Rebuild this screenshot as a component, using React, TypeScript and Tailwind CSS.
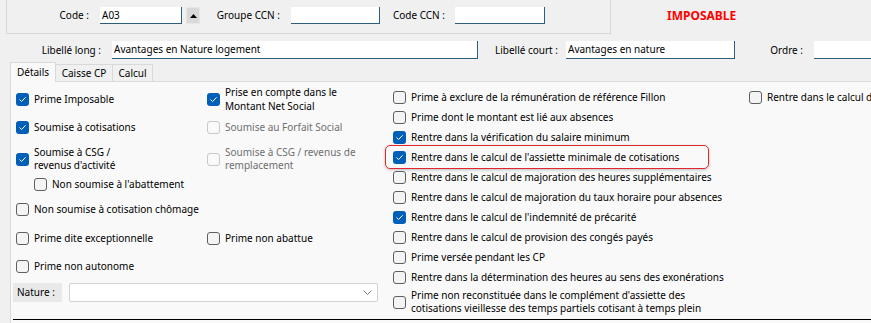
import React from "react";

type CbProps = { checked?: boolean; disabled?: boolean };

function Box({ checked, disabled }: CbProps) {
  if (checked) {
    return (
      <span className="flex h-[13px] w-[13px] shrink-0 items-center justify-center rounded-[3px] bg-[#005fb8]">
        <svg width="9" height="9" viewBox="0 0 9 9" fill="none">
          <path d="M1.8 4.8 L3.6 6.5 L7.3 2.6" stroke="white" strokeWidth="1" strokeLinecap="round" strokeLinejoin="round" />
        </svg>
      </span>
    );
  }
  if (disabled) {
    return <span className="block h-[13px] w-[13px] shrink-0 rounded-[3px] border border-[#c8c8c8] bg-[#fafafa]" />;
  }
  return <span className="block h-[13px] w-[13px] shrink-0 rounded-[3px] border border-[#5f5f5f] bg-[#f4f4f4]" />;
}

function Cb({ checked, disabled, children, className = "" }: CbProps & { children: React.ReactNode; className?: string }) {
  return (
    <div className={`flex items-center gap-[5px] ${className}`}>
      <Box checked={checked} disabled={disabled} />
      <span className={`whitespace-nowrap ${disabled ? "text-[#6f6f6f]" : "text-black"}`}>{children}</span>
    </div>
  );
}

function Field({ className = "", children }: { className?: string; children?: React.ReactNode }) {
  return (
    <div className={`flex items-center bg-white border-b border-r border-[#2c5d7c] pl-[2px] whitespace-nowrap overflow-hidden ${className}`}>
      {children}
    </div>
  );
}

const col3: { t: string; c?: boolean; hl?: boolean }[] = [
  { t: "Prime à exclure de la rémunération de référence Fillon" },
  { t: "Prime dont le montant est lié aux absences" },
  { t: "Rentre dans la vérification du salaire minimum", c: true },
  { t: "Rentre dans le calcul de l'assiette minimale de cotisations", c: true, hl: true },
  { t: "Rentre dans le calcul de majoration des heures supplémentaires" },
  { t: "Rentre dans le calcul de majoration du taux horaire pour absences" },
  { t: "Rentre dans le calcul de l'indemnité de précarité", c: true },
  { t: "Rentre dans le calcul de provision des congés payés" },
  { t: "Prime versée pendant les CP" },
  { t: "Rentre dans la détermination des heures au sens des exonérations" },
];

export default function App() {
  return (
    <div className="relative h-[323px] w-[871px] overflow-hidden bg-[#f0f0f0] font-['Noto_Sans',sans-serif] text-[10px] text-black">
      {/* Top group */}
      <div className="flex h-[34px] items-start">
        <div className="ml-[6px] flex h-[34px] w-[605px] shrink-0 items-start border-b border-l border-r border-[#d7d7d7] pt-[7px]">
          <div className="flex h-[17px] w-[82px] shrink-0 items-center justify-end">Code :</div>
          <Field className="ml-[11px] h-[17px] w-[82px] shrink-0">A03</Field>
          <div className="ml-[4px] flex h-[17px] w-[14px] shrink-0 items-center justify-center border border-[#e6e6e6] bg-[#d9d9d9]">
            <svg width="7" height="4" viewBox="0 0 7 4">
              <path d="M0 4 L3.5 0 L7 4 Z" fill="#000" />
            </svg>
          </div>
          <div className="flex h-[17px] w-[80px] shrink-0 items-center justify-end">Groupe CCN :</div>
          <Field className="ml-[11px] h-[17px] w-[89px] shrink-0" />
          <div className="flex h-[17px] w-[65px] shrink-0 items-center justify-end">Code CCN :</div>
          <Field className="ml-[10px] h-[17px] w-[90px] shrink-0" />
        </div>
        <div className="ml-[56px] pt-[7px] text-[12px] font-bold leading-[17px] text-[#ff0000]">IMPOSABLE</div>
      </div>

      {/* Libellé row */}
      <div className="mt-[7px] flex h-[18px] items-center">
        <div className="flex h-[18px] w-[101px] shrink-0 items-center justify-end">Libellé long :</div>
        <Field className="ml-[11px] h-[18px] w-[366px] shrink-0">Avantages en Nature logement</Field>
        <div className="flex h-[18px] w-[80px] shrink-0 items-center justify-end">Libellé court :</div>
        <Field className="ml-[8px] h-[18px] w-[169px] shrink-0">Avantages en nature</Field>
        <div className="flex h-[18px] w-[68px] shrink-0 items-center justify-end">Ordre :</div>
        <Field className="ml-[11px] h-[18px] w-[80px] shrink-0" />
      </div>

      {/* Tabs */}
      <div className="mt-[3px] flex h-[20px] items-end pl-[10px]">
        <div className="relative z-10 flex h-[20px] w-[46px] items-start justify-center border-l border-r border-t border-[#d9d9d9] bg-[#f9f9f9] pt-[2px]">
          Détails
        </div>
        <div className="relative z-10 mb-[1px] flex h-[17px] w-[57px] items-center justify-center border-r border-t border-[#d9d9d9] bg-[#f0f0f0]">
          Caisse CP
        </div>
        <div className="relative z-10 mb-[1px] flex h-[17px] w-[40px] items-center justify-center border-r border-t border-[#d9d9d9] bg-[#f0f0f0]">
          Calcul
        </div>
      </div>

      {/* Panel */}
      <div className="-mt-px ml-[10px] flex h-[242px] flex-col border-l border-t border-[#dadada] bg-[#f9f9f9]">
        <div className="flex h-[237px]">
          {/* Left area */}
          <div className="flex w-[382px] shrink-0 flex-col pl-[5px]">
            <div className="mt-[3px] flex h-[28px] items-center">
              <Cb checked className="w-[191px]">Prime Imposable</Cb>
              <Cb checked>
                <span className="block leading-[14px]">
                  Prise en compte dans le
                  <br />
                  Montant Net Social
                </span>
              </Cb>
            </div>
            <div className="mt-[7px] flex h-[14px] items-center">
              <Cb checked className="w-[191px]">Soumise à cotisations</Cb>
              <Cb disabled>Soumise au Forfait Social</Cb>
            </div>
            <div className="mt-[12px] flex h-[26px] items-center">
              <Cb checked className="w-[191px]">
                <span className="block leading-[13px]">
                  Soumise à CSG /
                  <br />
                  revenus d'activité
                </span>
              </Cb>
              <Cb disabled>
                <span className="block leading-[13px]">
                  Soumise à CSG / revenus de
                  <br />
                  remplacement
                </span>
              </Cb>
            </div>
            <div className="mt-[5px] flex h-[14px] items-center pl-[18px]">
              <Cb>Non soumise à l'abattement</Cb>
            </div>
            <div className="mt-[11px] flex h-[14px] items-center">
              <Cb>Non soumise à cotisation chômage</Cb>
            </div>
            <div className="mt-[15px] flex h-[14px] items-center">
              <Cb className="w-[191px]">Prime dite exceptionnelle</Cb>
              <Cb>Prime non abattue</Cb>
            </div>
            <div className="mt-[14px] flex h-[14px] items-center">
              <Cb>Prime non autonome</Cb>
            </div>
            <div className="-ml-[3px] mt-[9px] flex h-[20px] items-center">
              <div className="flex h-[19px] w-[49px] items-center bg-[#e9e9e9] pl-[4px]">Nature :</div>
              <div className="ml-[7px] flex h-[19px] w-[309px] items-center justify-end rounded-[2px] border border-[#d2d2d2] bg-white pr-[5px]">
                <svg width="9" height="5" viewBox="0 0 9 5" fill="none">
                  <path d="M0.5 0.5 L4.5 4.5 L8.5 0.5" stroke="#7a7a7a" strokeWidth="1" />
                </svg>
              </div>
            </div>
          </div>

          {/* Column 3 */}
          <div className="flex w-[356px] shrink-0 flex-col pt-[5px]">
            {col3.map((r, i) => (
              <div key={i} className="relative flex h-[20px] items-center">
                {r.hl && (
                  <span className="pointer-events-none absolute -left-[8px] top-[-2px] h-[24px] w-[324px] rounded-[5px] border-[1.5px] border-[#e3262c] shadow-[0_1px_3px_rgba(0,0,0,0.25)]" />
                )}
                <Cb checked={r.c}>{r.t}</Cb>
              </div>
            ))}
            <div className="mt-[2px] flex h-[26px] items-center">
              <Cb>
                <span className="block leading-[13px]">
                  Prime non reconstituée dans le complément d'assiette des
                  <br />
                  cotisations vieillesse des temps partiels cotisant à temps plein
                </span>
              </Cb>
            </div>
          </div>

          {/* Column 4 */}
          <div className="flex flex-col pt-[5px]">
            <div className="flex h-[20px] items-center">
              <Cb>Rentre dans le calcul de l'assiette</Cb>
            </div>
          </div>
        </div>
        <div className="ml-[2px] h-px bg-black" />
      </div>
    </div>
  );
}
